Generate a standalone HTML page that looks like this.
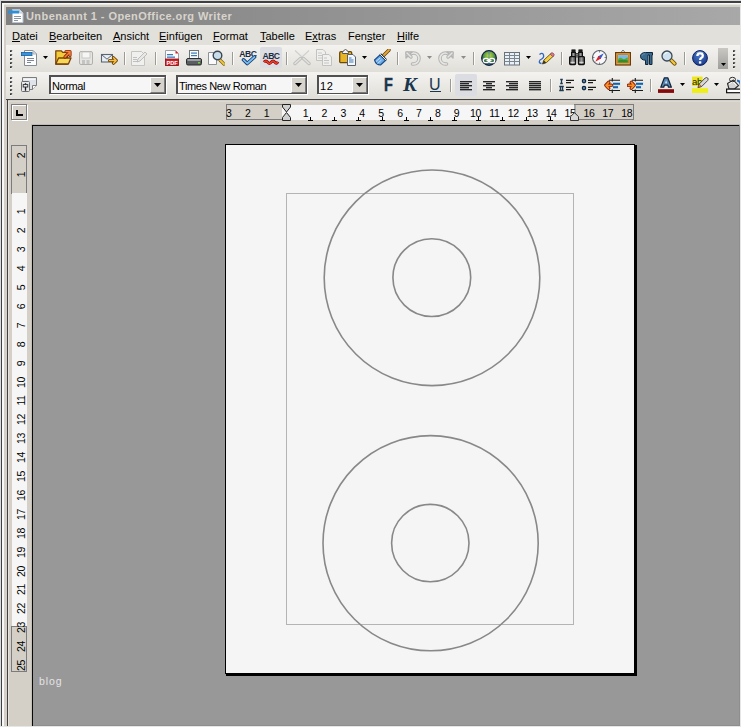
<!DOCTYPE html>
<html><head><meta charset="utf-8"><style>
html,body{margin:0;padding:0}
body{-webkit-font-smoothing:antialiased;width:741px;height:727px;overflow:hidden;position:relative;background:#d4d0c8;font-family:"Liberation Sans",sans-serif}
</style></head><body>
<div style="position:absolute;left:0px;top:0px;width:741px;height:1px;background:#dcdcdc"></div>
<div style="position:absolute;left:0px;top:1px;width:741px;height:2px;background:#404040"></div>
<div style="position:absolute;left:0px;top:3px;width:741px;height:1px;background:#f8f8f8"></div>
<div style="position:absolute;left:0px;top:4px;width:741px;height:1px;background:#e8e6e0"></div>
<div style="position:absolute;left:0px;top:0px;width:1px;height:727px;background:#d8dce0"></div>
<div style="position:absolute;left:1px;top:1px;width:1px;height:726px;background:#404040"></div>
<div style="position:absolute;left:2px;top:3px;width:2px;height:724px;background:#f8f8f8"></div>
<div style="position:absolute;left:6px;top:7px;width:735px;height:18px;background:linear-gradient(to right,#808080,#a8a8a8)"></div>
<div style="position:absolute;left:6px;top:25px;width:735px;height:20px;background:#e2e0da"></div>
<div style="position:absolute;left:6px;top:45px;width:735px;height:27px;background:linear-gradient(#f4f3f0,#e0ded8)"></div>
<div style="position:absolute;left:6px;top:72px;width:735px;height:27px;background:linear-gradient(#f4f3f0,#e0ded8)"></div>
<div style="position:absolute;left:6px;top:99px;width:735px;height:1px;background:#404040"></div>
<div style="position:absolute;left:6px;top:100px;width:735px;height:627px;background:#d4d0c8"></div>
<div style="position:absolute;left:7px;top:100px;width:1px;height:627px;background:#404040"></div>
<div style="position:absolute;left:32px;top:125px;width:709px;height:602px;background:#989898"></div>
<div style="position:absolute;left:31px;top:124px;width:710px;height:1px;background:#bcbab4"></div>
<div style="position:absolute;left:31px;top:124px;width:1px;height:603px;background:#c4c0b8"></div>
<div style="position:absolute;left:32px;top:125px;width:709px;height:1px;background:#080808"></div>
<div style="position:absolute;left:32px;top:125px;width:1px;height:602px;background:#080808"></div>
<div style="position:absolute;left:225px;top:144px;width:409px;height:529px;background:#f5f5f5;border-left:1px solid #000;border-top:1px solid #000"></div>
<div style="position:absolute;left:634px;top:145px;width:3px;height:531px;background:#000"></div>
<div style="position:absolute;left:226px;top:673px;width:411px;height:3px;background:#000"></div>
<div style="position:absolute;left:286px;top:193px;width:288px;height:432px;border:1px solid #b4b4b4;box-sizing:border-box"></div>
<svg style="position:absolute;left:225px;top:144px" width="410" height="530" viewBox="0 0 410 530"><circle cx="207" cy="133.8" r="107.8" fill="none" stroke="#888" stroke-width="1.6"/><circle cx="206.8" cy="133.6" r="38.9" fill="none" stroke="#888" stroke-width="1.6"/><circle cx="205.6" cy="399.2" r="107.6" fill="none" stroke="#888" stroke-width="1.6"/><circle cx="205.3" cy="399.1" r="38.7" fill="none" stroke="#888" stroke-width="1.6"/></svg>
<div style="position:absolute;left:39px;top:675px;white-space:nowrap;font-size:10.5px;color:#e4e4e4;line-height:13px;letter-spacing:0.9px">blog</div>
<svg style="position:absolute;left:8px;top:9px" width="16" height="14" viewBox="0 0 16 14"><path d="M4.5 0.5h7l3.5 3.5v9.5h-10.5z" fill="#fff" stroke="#b8c4d0" stroke-width="1"/><path d="M11.5 0.5v3.5h3.5" fill="#dde6ee" stroke="#b8c4d0" stroke-width="1"/><rect x="0" y="1.5" width="11" height="3" fill="#2d8fd8"/><rect x="6" y="7" width="7" height="1" fill="#8a96a2"/><rect x="6" y="9" width="7" height="1" fill="#8a96a2"/><rect x="6" y="11" width="4" height="1" fill="#8a96a2"/></svg>
<div style="position:absolute;left:26px;top:9px;white-space:nowrap;font-size:11px;font-weight:bold;color:#d8d4cc;line-height:14px;letter-spacing:0.43px">Unbenannt 1 - OpenOffice.org Writer</div>
<div style="position:absolute;left:12px;top:29px;white-space:nowrap;font-size:11px;color:#000;line-height:14px"><u>D</u>atei</div>
<div style="position:absolute;left:49px;top:29px;white-space:nowrap;font-size:11px;color:#000;line-height:14px"><u>B</u>earbeiten</div>
<div style="position:absolute;left:113px;top:29px;white-space:nowrap;font-size:11px;color:#000;line-height:14px"><u>A</u>nsicht</div>
<div style="position:absolute;left:159px;top:29px;white-space:nowrap;font-size:11px;color:#000;line-height:14px"><u>E</u>infügen</div>
<div style="position:absolute;left:213px;top:29px;white-space:nowrap;font-size:11px;color:#000;line-height:14px"><u>F</u>ormat</div>
<div style="position:absolute;left:260px;top:29px;white-space:nowrap;font-size:11px;color:#000;line-height:14px"><u>T</u>abelle</div>
<div style="position:absolute;left:305px;top:29px;white-space:nowrap;font-size:11px;color:#000;line-height:14px">E<u>x</u>tras</div>
<div style="position:absolute;left:348px;top:29px;white-space:nowrap;font-size:11px;color:#000;line-height:14px">Fen<u>s</u>ter</div>
<div style="position:absolute;left:397px;top:29px;white-space:nowrap;font-size:11px;color:#000;line-height:14px"><u>H</u>ilfe</div>
<svg style="position:absolute;left:10px;top:50px" width="4" height="21" viewBox="0 0 4 21"><path d="M0 0.2h2.2v.8l-1.3 1.3h-.9z" fill="#2e2e2e"/><path d="M0 2.6h1.6" stroke="#fff" stroke-width=".8"/><path d="M0 4.2h2.2v.8l-1.3 1.3h-.9z" fill="#2e2e2e"/><path d="M0 6.6h1.6" stroke="#fff" stroke-width=".8"/><path d="M0 8.2h2.2v.8l-1.3 1.3h-.9z" fill="#2e2e2e"/><path d="M0 10.6h1.6" stroke="#fff" stroke-width=".8"/><path d="M0 12.2h2.2v.8l-1.3 1.3h-.9z" fill="#2e2e2e"/><path d="M0 14.6h1.6" stroke="#fff" stroke-width=".8"/><path d="M0 16.2h2.2v.8l-1.3 1.3h-.9z" fill="#2e2e2e"/><path d="M0 18.6h1.6" stroke="#fff" stroke-width=".8"/></svg>
<svg style="position:absolute;left:21px;top:50px" width="16" height="16" viewBox="0 0 16 16"><path d="M3.5 .5h8.5l3.5 3.5v11.5h-12z" fill="#fdfdfd" stroke="#858c94"/><path d="M12 .5l3.5 3.5h-3.5z" fill="#e4e8ec" stroke="#a0a6ac" stroke-width=".8"/><rect x=".4" y="2.4" width="10.6" height="3.2" fill="#3494dc" stroke="#1b5f9e" stroke-width=".8"/><rect x="6" y="8" width="7" height="1" fill="#7c8894"/><rect x="6" y="10" width="7" height="1" fill="#7c8894"/><rect x="6" y="12" width="4" height="1" fill="#7c8894"/></svg>
<svg style="position:absolute;left:43px;top:56px" width="5" height="3" viewBox="0 0 5 3"><path d="M0 0h5l-2.5 3z" fill="#000"/></svg>
<svg style="position:absolute;left:55px;top:49px" width="17" height="17" viewBox="0 0 17 17"><path d="M.8 15V1.8h5.4l1.6 1.6h4.6V15z" fill="#f2cc38" stroke="#7a4008" stroke-width="1.3" stroke-linejoin="round"/><path d="M3.6 9h12.4l-2.6 6h-12.6z" fill="#f6d858" stroke="#7a4008" stroke-width="1.3" stroke-linejoin="round"/><path d="M10 8l4.5-4.5M11 2.5h4v4" fill="none" stroke="#8a2a08" stroke-width="3.2" stroke-linecap="round" stroke-linejoin="round"/><path d="M10 8l4.5-4.5M11 2.5h4v4" fill="none" stroke="#f4823a" stroke-width="1.5" stroke-linecap="round" stroke-linejoin="round"/></svg>
<svg style="position:absolute;left:79px;top:51px" width="14" height="14" viewBox="0 0 14 14"><rect x=".5" y=".5" width="13" height="13" rx="1.5" fill="#e6e5e2" stroke="#b0b0ae"/><rect x="3" y="1" width="8" height="6" fill="#f6f6f4" stroke="#c0c0be" stroke-width=".8"/><rect x="3" y="9" width="3" height="4" fill="#c4c4c2"/><rect x="7.5" y="9" width="3" height="4" fill="#c4c4c2"/></svg>
<svg style="position:absolute;left:100px;top:53px" width="18" height="12" viewBox="0 0 18 12"><rect x="1.5" y="1.5" width="11" height="7.5" fill="#e8eef6" stroke="#5c6670" stroke-width="1.1"/><path d="M1.8 1.8l5.2 4.4 5.2-4.4" fill="none" stroke="#5c6670" stroke-width="1"/><path d="M9.5 7.5h6M13.5 4.8l2.7 2.7-2.7 2.7" fill="none" stroke="#6a4008" stroke-width="3.2" stroke-linecap="round" stroke-linejoin="round"/><path d="M9.5 7.5h6M13.5 4.8l2.7 2.7-2.7 2.7" fill="none" stroke="#f8c040" stroke-width="1.5" stroke-linecap="round" stroke-linejoin="round"/></svg>
<div style="position:absolute;left:124px;top:52px;width:1px;height:13px;background:#9c9a94;box-shadow:1px 0 0 #fcfcfa"></div>
<svg style="position:absolute;left:131px;top:50px" width="16" height="16" viewBox="0 0 16 16"><path d="M.5 1.5h10l3 3v11h-13z" fill="#f0f0ee" stroke="#c4c4c2"/><rect x="2" y="7" width="4" height="1" fill="#c0c0c0"/><rect x="2" y="9" width="4" height="1" fill="#c0c0c0"/><rect x="2" y="11" width="4" height="1" fill="#c0c0c0"/><path d="M6 12l1-3 7-7 2 2-7 7z" fill="#e8e8e6" stroke="#b8b8b6" stroke-width=".9"/></svg>
<div style="position:absolute;left:155px;top:52px;width:1px;height:13px;background:#9c9a94;box-shadow:1px 0 0 #fcfcfa"></div>
<svg style="position:absolute;left:165px;top:50px" width="14" height="16" viewBox="0 0 14 16"><path d="M.5 .5h10l3 3v12h-13z" fill="#fbfbfb" stroke="#9aa0a6"/><path d="M10.5 .5v3h3" fill="#d8202a"/><rect x="2" y="4" width="6" height="1.3" fill="#3a78b8"/><rect x="2" y="6.5" width="8" height="1.3" fill="#3a78b8"/><rect x=".5" y="9" width="13" height="6.5" fill="#d02028" stroke="#901016" stroke-width=".8"/><text x="7" y="14.6" font-size="5.6" font-weight="bold" fill="#fff" text-anchor="middle" font-family="Liberation Sans">PDF</text></svg>
<svg style="position:absolute;left:186px;top:50px" width="16" height="16" viewBox="0 0 16 16"><rect x="3.5" y=".5" width="9" height="8" fill="#fafafa" stroke="#6e7478"/><rect x="5" y="2.5" width="6" height="1.2" fill="#3a78b8"/><rect x="5" y="5" width="6" height="1.2" fill="#3a78b8"/><rect x=".5" y="8.5" width="15" height="6.5" rx="1.5" fill="#5a5e60" stroke="#2a2c2e"/><rect x="1.5" y="9" width="13" height="2" fill="#9aa0a2"/><rect x="12" y="12" width="2" height="1.5" fill="#6ad040"/></svg>
<svg style="position:absolute;left:208px;top:50px" width="17" height="16" viewBox="0 0 17 16"><path d="M.5 2.5h8v12h-8z" fill="#fafafa" stroke="#8c9298"/><path d="M12 10l4 4" stroke="#7a5a10" stroke-width="3.2" stroke-linecap="round"/><path d="M12 10l4 4" stroke="#f0c840" stroke-width="1.8" stroke-linecap="round"/><circle cx="9.5" cy="5.5" r="4.3" fill="#c8dcec" stroke="#3a4650" stroke-width="1.4"/></svg>
<div style="position:absolute;left:232px;top:52px;width:1px;height:13px;background:#9c9a94;box-shadow:1px 0 0 #fcfcfa"></div>
<svg style="position:absolute;left:239px;top:50px" width="18" height="16" viewBox="0 0 18 16"><text x="8.8" y="6.6" font-size="8.6" font-weight="bold" fill="#1a2c44" text-anchor="middle" font-family="Liberation Sans" letter-spacing="-.5">ABC</text><path d="M4.5 9.8l3.7 3.7 7.3-6.5" fill="none" stroke="#163e70" stroke-width="3.6" stroke-linejoin="round" stroke-linecap="round"/><path d="M4.5 9.8l3.7 3.7 7.3-6.5" fill="none" stroke="#78c0f4" stroke-width="1.7" stroke-linejoin="round" stroke-linecap="round"/></svg>
<div style="position:absolute;left:260px;top:47px;width:22px;height:21px;background:#dcdde2;border-radius:2px"></div>
<svg style="position:absolute;left:262px;top:51px" width="18" height="16" viewBox="0 0 18 16"><text x="9" y="7.6" font-size="8.6" font-weight="bold" fill="#1a2c44" text-anchor="middle" font-family="Liberation Sans" letter-spacing="-.5">ABC</text><path d="M2 11.2q1.8-2.4 3.6 0t3.6 0 3.6 0 3-.5" fill="none" stroke="#8a0a0a" stroke-width="3"/><path d="M2 11.2q1.8-2.4 3.6 0t3.6 0 3.6 0 3-.5" fill="none" stroke="#f04028" stroke-width="1.5"/></svg>
<div style="position:absolute;left:286px;top:52px;width:1px;height:13px;background:#9c9a94;box-shadow:1px 0 0 #fcfcfa"></div>
<svg style="position:absolute;left:293px;top:49px" width="18" height="17" viewBox="0 0 18 17"><path d="M2 1.5l14 13M16 1.5l-14 13" stroke="#cfcfcd" stroke-width="1.1"/><path d="M2 14.5l5.5-5M16 14.5l-5.5-5" stroke="#bdbdbb" stroke-width="3.4" stroke-linecap="round"/><path d="M2 14.5l5.5-5M16 14.5l-5.5-5" stroke="#e2e2e0" stroke-width="1.6" stroke-linecap="round"/></svg>
<svg style="position:absolute;left:316px;top:49px" width="17" height="17" viewBox="0 0 17 17"><path d="M.5 .5h6.5l2.5 2.5v8.5h-9z" fill="#f0f0ee" stroke="#c2c2c0"/><path d="M2 4h4M2 6.5h4M2 9h4" stroke="#c8c8c6" stroke-width="1"/><path d="M6.5 5.5h6.5l2.5 2.5v8.5h-9z" fill="#f0f0ee" stroke="#c2c2c0"/><path d="M8 9h3M8 11.5h5M8 14h5" stroke="#c4c4c2" stroke-width="1"/></svg>
<svg style="position:absolute;left:339px;top:49px" width="18" height="17" viewBox="0 0 18 17"><rect x=".7" y="2.7" width="12" height="11" rx="1.2" fill="#e8b428" stroke="#6a4a0a" stroke-width="1.3"/><path d="M3.5 4.5h6v-1.2q-.5-1.8-3-2.8q-2.5 1-3 2.8z" fill="#f4f4f4" stroke="#555" stroke-width="1"/><path d="M8.5 5.5h5.5l2.5 2.5v8.5h-8z" fill="#f4f8fc" stroke="#5a6068"/><path d="M10 11h4.5M10 13h4.5M10 9h2.5" stroke="#3a78b8" stroke-width="1.1"/></svg>
<svg style="position:absolute;left:362px;top:56px" width="5" height="3" viewBox="0 0 5 3"><path d="M0 0h5l-2.5 3z" fill="#000"/></svg>
<svg style="position:absolute;left:373px;top:49px" width="18" height="17" viewBox="0 0 18 17"><path d="M10.5 6.5l5.5-5.5" stroke="#6a4208" stroke-width="3.4" stroke-linecap="round"/><path d="M10.5 6.5l5.5-5.5" stroke="#e2a83a" stroke-width="1.8" stroke-linecap="round"/><path d="M1.5 11l6-5.5 5.5 5.5-5.5 5q-4.5 0-6-5z" fill="#68aae8" stroke="#1a4a88" stroke-width="1.1" stroke-linejoin="round"/><path d="M7.2 5.2l5.8 5.8" stroke="#2a3a50" stroke-width="2.4"/><path d="M7.2 5.2l5.8 5.8" stroke="#e8f0f8" stroke-width="1"/><path d="M3 12.5l4-3.5M4.5 14.5l4-3.5" stroke="#c4e0fa" stroke-width="1"/></svg>
<div style="position:absolute;left:397px;top:52px;width:1px;height:13px;background:#9c9a94;box-shadow:1px 0 0 #fcfcfa"></div>
<svg style="position:absolute;left:404px;top:50px" width="17" height="17" viewBox="0 0 17 17"><path d="M5 5.5q1.5-2.5 4.5-2.5a5.5 5.5 0 0 1 0 11h-1" fill="none" stroke="#b4b4b2" stroke-width="3.6" stroke-linecap="round"/><path d="M5 5.5q1.5-2.5 4.5-2.5a5.5 5.5 0 0 1 0 11h-1" fill="none" stroke="#e6e6e4" stroke-width="1.6" stroke-linecap="round"/><path d="M2 8v-6h6z" fill="#e6e6e4" stroke="#b4b4b2" stroke-width="1.4" stroke-linejoin="round"/><path d="M3 3l4 4" stroke="#b4b4b2" stroke-width="3.4" stroke-linecap="round"/><path d="M3 3l4 4" stroke="#e6e6e4" stroke-width="1.4" stroke-linecap="round"/></svg>
<svg style="position:absolute;left:427px;top:56px" width="5" height="3" viewBox="0 0 5 3"><path d="M0 0h5l-2.5 3z" fill="#8c8c8a"/></svg>
<svg style="position:absolute;left:438px;top:50px" width="17" height="17" viewBox="0 0 17 17"><g transform="translate(17,0) scale(-1,1)"><path d="M5 5.5q1.5-2.5 4.5-2.5a5.5 5.5 0 0 1 0 11h-1" fill="none" stroke="#b4b4b2" stroke-width="3.6" stroke-linecap="round"/><path d="M5 5.5q1.5-2.5 4.5-2.5a5.5 5.5 0 0 1 0 11h-1" fill="none" stroke="#e6e6e4" stroke-width="1.6" stroke-linecap="round"/><path d="M2 8v-6h6z" fill="#e6e6e4" stroke="#b4b4b2" stroke-width="1.4" stroke-linejoin="round"/><path d="M3 3l4 4" stroke="#b4b4b2" stroke-width="3.4" stroke-linecap="round"/><path d="M3 3l4 4" stroke="#e6e6e4" stroke-width="1.4" stroke-linecap="round"/></g></svg>
<svg style="position:absolute;left:461px;top:56px" width="5" height="3" viewBox="0 0 5 3"><path d="M0 0h5l-2.5 3z" fill="#8c8c8a"/></svg>
<div style="position:absolute;left:473px;top:52px;width:1px;height:13px;background:#9c9a94;box-shadow:1px 0 0 #fcfcfa"></div>
<svg style="position:absolute;left:481px;top:50px" width="16" height="16" viewBox="0 0 16 16"><defs><radialGradient id="gl" cx="50%" cy="35%" r="60%"><stop offset="0" stop-color="#c8e040"/><stop offset=".55" stop-color="#5a9a48"/><stop offset="1" stop-color="#1e3c64"/></radialGradient></defs><circle cx="8" cy="8" r="7.4" fill="url(#gl)" stroke="#14243a" stroke-width="1.1"/><path d="M8 1v14" stroke="#3a7ab8" stroke-width=".8"/><rect x="2.3" y="8.3" width="5.4" height="4.4" rx="2.2" fill="none" stroke="#fff" stroke-width="1.3"/><rect x="8.3" y="8.3" width="5.4" height="4.4" rx="2.2" fill="none" stroke="#fff" stroke-width="1.3"/><path d="M5.5 10.5h5" stroke="#fff" stroke-width="1.2"/></svg>
<svg style="position:absolute;left:504px;top:52px" width="16" height="14" viewBox="0 0 16 14"><rect x=".5" y=".5" width="15" height="12.5" fill="#e8f0f8" stroke="#687078"/><path d="M5.5 .5v12.5M10.5 .5v12.5M.5 3.5h15M.5 6.5h15M.5 9.5h15" stroke="#7c848c" stroke-width="1"/></svg>
<svg style="position:absolute;left:526px;top:56px" width="5" height="3" viewBox="0 0 5 3"><path d="M0 0h5l-2.5 3z" fill="#000"/></svg>
<svg style="position:absolute;left:538px;top:52px" width="17" height="13" viewBox="0 0 17 13"><path d="M1.5 2.5q3-2.5 4 .5t-3.5 5q-2 3 1.5 3.5" fill="none" stroke="#2e64c0" stroke-width="1.3"/><path d="M4.5 12l1.3-3.8 7.5-7 2.5 2.5-7.5 7z" fill="#f6d040" stroke="#5a4a20" stroke-width=".9"/><path d="M12.3 2.2l2.5 2.5 1.2-1.2q.5-1-.5-2t-2 -.5z" fill="#e07a90" stroke="#7a3a48" stroke-width=".7"/><path d="M4.5 12l1.3-3.8 2.5 2.5z" fill="#333"/></svg>
<div style="position:absolute;left:561px;top:52px;width:1px;height:13px;background:#9c9a94;box-shadow:1px 0 0 #fcfcfa"></div>
<svg style="position:absolute;left:569px;top:49px" width="16" height="17" viewBox="0 0 16 17"><defs><linearGradient id="bn" x1="0" x2="1"><stop offset="0" stop-color="#3a3a3a"/><stop offset=".5" stop-color="#9a9a9a"/><stop offset="1" stop-color="#3a3a3a"/></linearGradient></defs><rect x="2.5" y="3.5" width="4" height="4.5" fill="url(#bn)" stroke="#111" stroke-width="1"/><rect x="9.5" y="3.5" width="4" height="4.5" fill="url(#bn)" stroke="#111" stroke-width="1"/><rect x="2.8" y=".8" width="3.4" height="2.7" fill="#1a1a1a" stroke="#111" stroke-width=".6"/><rect x="9.8" y=".8" width="3.4" height="2.7" fill="#1a1a1a" stroke="#111" stroke-width=".6"/><rect x="6.5" y="4.5" width="3" height="3.5" fill="#9a9a9a" stroke="#222" stroke-width=".8"/><path d="M6.5 6.2h3" stroke="#333" stroke-width=".8"/><rect x=".6" y="7.6" width="6" height="8" rx="1" fill="url(#bn)" stroke="#111" stroke-width="1.2"/><rect x="9.4" y="7.6" width="6" height="8" rx="1" fill="url(#bn)" stroke="#111" stroke-width="1.2"/><path d="M1.5 13.3h4.2M10.3 13.3h4.2" stroke="#e8e8e8" stroke-width="1"/></svg>
<svg style="position:absolute;left:592px;top:50px" width="16" height="16" viewBox="0 0 16 16"><circle cx="7.5" cy="7.5" r="7" fill="#f8f8fa" stroke="#5a6268" stroke-width="1.1"/><path d="M11.8 3.2l-5.9 3.2 2.7 2.7z" fill="#2c5cd0"/><path d="M3.2 11.8l5.9-3.2-2.7-2.7z" fill="#e02020"/><path d="M7.5 1v1.5M7.5 12.5v1.5M1 7.5h1.5M12.5 7.5h1.5" stroke="#666" stroke-width=".8"/></svg>
<svg style="position:absolute;left:615px;top:49px" width="16" height="17" viewBox="0 0 16 17"><path d="M5.5 4l2.5-3 2.5 3" fill="none" stroke="#666" stroke-width=".9"/><rect x=".6" y="3.6" width="14.8" height="12.4" fill="#e8a848" stroke="#6a3a08" stroke-width="1.2"/><rect x="2.8" y="5.8" width="10.4" height="8" fill="#f4d8a0" stroke="#8a5a20" stroke-width=".6"/><rect x="3.2" y="6.2" width="9.6" height="7.2" fill="#78b8e8"/><path d="M3.2 10q2-2.2 4-.5t5.6-1.2v5.1h-9.6z" fill="#58a838"/><path d="M3.2 11.5q3-1.5 9.6 0v1.9h-9.6z" fill="#3a8a28"/></svg>
<svg style="position:absolute;left:640px;top:52px" width="13" height="13" viewBox="0 0 13 13"><path d="M5.5 .5H12.5V3H12V12.5H9.5V3H8V12.5H5.5V8.2C2 8.2 .5 6.5 .5 4.3C.5 2 2.2 .5 5.5 .5Z" fill="#3a6a90" stroke="#0e2638" stroke-width="1"/><path d="M5 1.8C3 1.8 2 2.8 2 4" fill="none" stroke="#6a9cc0" stroke-width=".8"/></svg>
<svg style="position:absolute;left:661px;top:50px" width="16" height="16" viewBox="0 0 16 16"><path d="M9.8 9.8l3.8 3.8" stroke="#6a4a08" stroke-width="4" stroke-linecap="round"/><path d="M9.8 9.8l3.8 3.8" stroke="#f0c840" stroke-width="2.2" stroke-linecap="round"/><circle cx="6" cy="6" r="5" fill="#cfe0ee" stroke="#3c4a56" stroke-width="1.3"/><path d="M3.5 4.5q1-2 3-2" fill="none" stroke="#fff" stroke-width=".9"/></svg>
<div style="position:absolute;left:684px;top:52px;width:1px;height:13px;background:#9c9a94;box-shadow:1px 0 0 #fcfcfa"></div>
<svg style="position:absolute;left:692px;top:50px" width="16" height="16" viewBox="0 0 16 16"><defs><radialGradient id="hp" cx="45%" cy="35%" r="65%"><stop offset="0" stop-color="#4a78c8"/><stop offset="1" stop-color="#1c3c8c"/></radialGradient></defs><circle cx="8" cy="8" r="7.4" fill="url(#hp)" stroke="#0c2060" stroke-width="1"/><path d="M4.6 2.6q3.4-1.3 6.8 0" fill="none" stroke="#8aa8e0" stroke-width=".9"/><path d="M5.4 5.9q0-2.6 2.7-2.6t2.7 2.4q0 1.5-1.6 2.3q-1.1.6-1.1 2" fill="none" stroke="#fff" stroke-width="2.3"/><rect x="6.9" y="11.3" width="2.4" height="2.3" fill="#fff"/></svg>
<div style="position:absolute;left:718px;top:48px;width:10px;height:21px;background:linear-gradient(#cac8c2,#9e9e9c)"></div>
<svg style="position:absolute;left:721px;top:63px" width="5" height="3" viewBox="0 0 5 3"><path d="M0 0h5l-2.5 3z" fill="#000"/></svg>
<svg style="position:absolute;left:733px;top:50px" width="4" height="21" viewBox="0 0 4 21"><path d="M0 0.2h2.2v.8l-1.3 1.3h-.9z" fill="#2e2e2e"/><path d="M0 2.6h1.6" stroke="#fff" stroke-width=".8"/><path d="M0 4.2h2.2v.8l-1.3 1.3h-.9z" fill="#2e2e2e"/><path d="M0 6.6h1.6" stroke="#fff" stroke-width=".8"/><path d="M0 8.2h2.2v.8l-1.3 1.3h-.9z" fill="#2e2e2e"/><path d="M0 10.6h1.6" stroke="#fff" stroke-width=".8"/><path d="M0 12.2h2.2v.8l-1.3 1.3h-.9z" fill="#2e2e2e"/><path d="M0 14.6h1.6" stroke="#fff" stroke-width=".8"/><path d="M0 16.2h2.2v.8l-1.3 1.3h-.9z" fill="#2e2e2e"/><path d="M0 18.6h1.6" stroke="#fff" stroke-width=".8"/></svg>
<svg style="position:absolute;left:10px;top:77px" width="4" height="21" viewBox="0 0 4 21"><path d="M0 0.2h2.2v.8l-1.3 1.3h-.9z" fill="#2e2e2e"/><path d="M0 2.6h1.6" stroke="#fff" stroke-width=".8"/><path d="M0 4.2h2.2v.8l-1.3 1.3h-.9z" fill="#2e2e2e"/><path d="M0 6.6h1.6" stroke="#fff" stroke-width=".8"/><path d="M0 8.2h2.2v.8l-1.3 1.3h-.9z" fill="#2e2e2e"/><path d="M0 10.6h1.6" stroke="#fff" stroke-width=".8"/><path d="M0 12.2h2.2v.8l-1.3 1.3h-.9z" fill="#2e2e2e"/><path d="M0 14.6h1.6" stroke="#fff" stroke-width=".8"/><path d="M0 16.2h2.2v.8l-1.3 1.3h-.9z" fill="#2e2e2e"/><path d="M0 18.6h1.6" stroke="#fff" stroke-width=".8"/></svg>
<svg style="position:absolute;left:21px;top:77px" width="16" height="16" viewBox="0 0 16 16"><path d="M1.5 .5h14v8l-4 4h-10z" fill="#dfe4ea" stroke="#7c7c7c"/><path d="M2.5 1.5h12v1.5h-12z" fill="#f4f6f8"/><path d="M11.5 12.5v-4h4" fill="#fafafa" stroke="#7c7c7c"/><rect x=".5" y="4.5" width="8" height="10" rx="1" fill="#e6eaee" stroke="#6a6a6a"/><path d="M4.5 6.2v1.5M4.5 10v3.8" stroke="#1a1a1a" stroke-width="1.3"/><rect x="2.2" y="7.6" width="4.6" height="2.4" fill="#f4f4f4" stroke="#2a2a2a" stroke-width=".9"/></svg>
<div style="position:absolute;left:49px;top:75px;width:117px;height:19px;background:#f6f6f6;box-sizing:border-box;border-top:2px solid #505050;border-left:2px solid #505050;border-right:1px solid #505050;border-bottom:1px solid #505050;box-shadow:1px 1px 0 #fff"></div>
<div style="position:absolute;left:150px;top:77px;width:15px;height:16px;background:#d6d3cc;box-sizing:border-box;border-top:1px solid #fff;border-left:1px solid #fff;border-right:1px solid #7a7a7a;border-bottom:1px solid #7a7a7a"></div>
<svg style="position:absolute;left:154px;top:83px" width="7" height="4" viewBox="0 0 7 4"><path d="M0 0h7l-3.5 4z" fill="#000"/></svg>
<div style="position:absolute;left:52px;top:80px;white-space:nowrap;font-size:11px;color:#000;line-height:13px;letter-spacing:-0.4px">Normal</div>
<div style="position:absolute;left:176px;top:75px;width:131px;height:19px;background:#f6f6f6;box-sizing:border-box;border-top:2px solid #505050;border-left:2px solid #505050;border-right:1px solid #505050;border-bottom:1px solid #505050;box-shadow:1px 1px 0 #fff"></div>
<div style="position:absolute;left:291px;top:77px;width:15px;height:16px;background:#d6d3cc;box-sizing:border-box;border-top:1px solid #fff;border-left:1px solid #fff;border-right:1px solid #7a7a7a;border-bottom:1px solid #7a7a7a"></div>
<svg style="position:absolute;left:295px;top:83px" width="7" height="4" viewBox="0 0 7 4"><path d="M0 0h7l-3.5 4z" fill="#000"/></svg>
<div style="position:absolute;left:179px;top:80px;white-space:nowrap;font-size:11px;color:#000;line-height:13px;letter-spacing:-0.4px">Times New Roman</div>
<div style="position:absolute;left:317px;top:75px;width:51px;height:19px;background:#f6f6f6;box-sizing:border-box;border-top:2px solid #505050;border-left:2px solid #505050;border-right:1px solid #505050;border-bottom:1px solid #505050;box-shadow:1px 1px 0 #fff"></div>
<div style="position:absolute;left:352px;top:77px;width:15px;height:16px;background:#d6d3cc;box-sizing:border-box;border-top:1px solid #fff;border-left:1px solid #fff;border-right:1px solid #7a7a7a;border-bottom:1px solid #7a7a7a"></div>
<svg style="position:absolute;left:356px;top:83px" width="7" height="4" viewBox="0 0 7 4"><path d="M0 0h7l-3.5 4z" fill="#000"/></svg>
<div style="position:absolute;left:320px;top:80px;white-space:nowrap;font-size:11px;color:#000;line-height:13px;letter-spacing:0.6px">12</div>
<div style="position:absolute;left:384px;top:75px;white-space:nowrap;font-size:18px;font-weight:bold;color:#1a364e;line-height:20px;transform:scaleX(0.8);transform-origin:0 0;-webkit-text-stroke:0.5px #1a364e">F</div>
<div style="position:absolute;left:403px;top:75px;white-space:nowrap;font-size:18px;font-weight:bold;font-style:italic;color:#1a364e;line-height:20px;font-family:&quot;Liberation Serif&quot;,serif;transform:scaleX(1.15);transform-origin:0 0">K</div>
<div style="position:absolute;left:429px;top:75px;white-space:nowrap;font-size:16px;color:#1a364e;line-height:20px">U</div>
<div style="position:absolute;left:430px;top:91px;width:11px;height:1px;background:#1a364e"></div>
<div style="position:absolute;left:450px;top:79px;width:1px;height:13px;background:#9c9a94;box-shadow:1px 0 0 #fcfcfa"></div>
<div style="position:absolute;left:455px;top:74px;width:22px;height:22px;background:#dcdde2;border-radius:2px"></div>
<div style="position:absolute;left:460px;top:81px;width:12px;height:1px;background:#262626;box-shadow:0 0.6px 0 #6a6a6a"></div>
<div style="position:absolute;left:460px;top:83px;width:9px;height:1px;background:#262626;box-shadow:0 0.6px 0 #6a6a6a"></div>
<div style="position:absolute;left:460px;top:85px;width:12px;height:1px;background:#262626;box-shadow:0 0.6px 0 #6a6a6a"></div>
<div style="position:absolute;left:460px;top:87px;width:9px;height:1px;background:#262626;box-shadow:0 0.6px 0 #6a6a6a"></div>
<div style="position:absolute;left:460px;top:89px;width:12px;height:1px;background:#262626;box-shadow:0 0.6px 0 #6a6a6a"></div>
<div style="position:absolute;left:483px;top:81px;width:12px;height:1px;background:#262626;box-shadow:0 0.6px 0 #6a6a6a"></div>
<div style="position:absolute;left:486px;top:83px;width:6px;height:1px;background:#262626;box-shadow:0 0.6px 0 #6a6a6a"></div>
<div style="position:absolute;left:483px;top:85px;width:12px;height:1px;background:#262626;box-shadow:0 0.6px 0 #6a6a6a"></div>
<div style="position:absolute;left:486px;top:87px;width:6px;height:1px;background:#262626;box-shadow:0 0.6px 0 #6a6a6a"></div>
<div style="position:absolute;left:483px;top:89px;width:12px;height:1px;background:#262626;box-shadow:0 0.6px 0 #6a6a6a"></div>
<div style="position:absolute;left:506px;top:81px;width:12px;height:1px;background:#262626;box-shadow:0 0.6px 0 #6a6a6a"></div>
<div style="position:absolute;left:509px;top:83px;width:9px;height:1px;background:#262626;box-shadow:0 0.6px 0 #6a6a6a"></div>
<div style="position:absolute;left:506px;top:85px;width:12px;height:1px;background:#262626;box-shadow:0 0.6px 0 #6a6a6a"></div>
<div style="position:absolute;left:509px;top:87px;width:9px;height:1px;background:#262626;box-shadow:0 0.6px 0 #6a6a6a"></div>
<div style="position:absolute;left:506px;top:89px;width:12px;height:1px;background:#262626;box-shadow:0 0.6px 0 #6a6a6a"></div>
<div style="position:absolute;left:529px;top:81px;width:12px;height:1px;background:#262626;box-shadow:0 0.6px 0 #6a6a6a"></div>
<div style="position:absolute;left:529px;top:83px;width:12px;height:1px;background:#262626;box-shadow:0 0.6px 0 #6a6a6a"></div>
<div style="position:absolute;left:529px;top:85px;width:12px;height:1px;background:#262626;box-shadow:0 0.6px 0 #6a6a6a"></div>
<div style="position:absolute;left:529px;top:87px;width:12px;height:1px;background:#262626;box-shadow:0 0.6px 0 #6a6a6a"></div>
<div style="position:absolute;left:529px;top:89px;width:12px;height:1px;background:#262626;box-shadow:0 0.6px 0 #6a6a6a"></div>
<div style="position:absolute;left:550px;top:79px;width:1px;height:13px;background:#9c9a94;box-shadow:1px 0 0 #fcfcfa"></div>
<svg style="position:absolute;left:556px;top:74px" width="44" height="22" viewBox="0 0 44 22"><path d="M4.2 5.5h2.6M5.5 5.5v4M4.2 9.5h2.6" fill="none" stroke="#1e3a52" stroke-width="1.3"/><path d="M3.2 12.5h4.6M4.5 12.5v4M6.5 12.5v4M3.2 16.5h4.6" fill="none" stroke="#1e3a52" stroke-width="1.3"/><path d="M10 6.4h8M10 8.6h5M10 13.4h8M10 15.6h5" stroke="#1c1c1c" stroke-width="1.3"/><circle cx="28" cy="7.1" r="1.7" fill="#5a8ab0" stroke="#10283c" stroke-width="1.2"/><circle cx="28" cy="14.1" r="1.7" fill="#5a8ab0" stroke="#10283c" stroke-width="1.2"/><path d="M32 6.4h8M32 8.6h5M32 13.4h8M32 15.6h5" stroke="#1c1c1c" stroke-width="1.3"/></svg>
<svg style="position:absolute;left:604px;top:78px" width="17" height="16" viewBox="0 0 17 16"><path d="M5 2.3h11M5 12.5h11M8.3 0v3.5M8.3 11.5v3.5" stroke="#1a1a1a" stroke-width="1.1"/><rect x="8.5" y="4.2" width="8" height="3.2" fill="#bfe4fa"/><rect x="8.5" y="7.6" width="6" height="3.2" fill="#bfe4fa"/><rect x="9" y="4.8" width="7" height="2" fill="#1e5e9e"/><rect x="9" y="8.2" width="5" height="2" fill="#1e5e9e"/><path d="M7.5 7.3h-5M4.6 4.5l-2.6 2.8 2.6 2.8" fill="none" stroke="#8a2008" stroke-width="3.6" stroke-linejoin="round" stroke-linecap="round"/><path d="M7.5 7.3h-5M4.6 4.5l-2.6 2.8 2.6 2.8" fill="none" stroke="#f8902a" stroke-width="1.7" stroke-linejoin="round" stroke-linecap="round"/></svg>
<svg style="position:absolute;left:627px;top:78px" width="17" height="16" viewBox="0 0 17 16"><path d="M5 2.3h11M5 12.5h11M8.3 0v3.5M8.3 11.5v3.5" stroke="#1a1a1a" stroke-width="1.1"/><rect x="8.5" y="4.2" width="8" height="3.2" fill="#bfe4fa"/><rect x="8.5" y="7.6" width="6" height="3.2" fill="#bfe4fa"/><rect x="9" y="4.8" width="7" height="2" fill="#1e5e9e"/><rect x="9" y="8.2" width="5" height="2" fill="#1e5e9e"/><path d="M1.5 7.3h5M4.4 4.5l2.6 2.8-2.6 2.8" fill="none" stroke="#8a2008" stroke-width="3.6" stroke-linejoin="round" stroke-linecap="round"/><path d="M1.5 7.3h5M4.4 4.5l2.6 2.8-2.6 2.8" fill="none" stroke="#f8902a" stroke-width="1.7" stroke-linejoin="round" stroke-linecap="round"/></svg>
<div style="position:absolute;left:650px;top:79px;width:1px;height:13px;background:#9c9a94;box-shadow:1px 0 0 #fcfcfa"></div>
<svg style="position:absolute;left:658px;top:77px" width="17" height="16" viewBox="0 0 17 16"><path d="M2.8 10.2l3.6-9.4h3.4l3.6 9.4h-2.9l-.7-2h-3.4l-.7 2z" fill="#5a88b4" stroke="#10243a" stroke-width="1.2" stroke-linejoin="round"/><path d="M7.1 6.3l1-3 1 3z" fill="#eef4fa"/><rect x="0" y="12.2" width="16" height="3.7" fill="#860a0a"/></svg>
<svg style="position:absolute;left:680px;top:83px" width="5" height="3" viewBox="0 0 5 3"><path d="M0 0h5l-2.5 3z" fill="#000"/></svg>
<svg style="position:absolute;left:692px;top:76px" width="17" height="18" viewBox="0 0 17 18"><rect x="0" y=".6" width="10.6" height="9.4" fill="#ece61e"/><rect x="0" y="12.2" width="16" height="4.8" fill="#eeee1a"/><text x="0" y="8.6" font-size="9.5" fill="#1a1a1a" font-family="Liberation Sans" letter-spacing="-.4">ab</text><path d="M6 11.5l1.2-3.5 6-6q1.5-1 2.5 0t0 2.5l-6 6z" fill="#d6d6d6" stroke="#4a4a4a" stroke-width="1"/><path d="M6 11.5l1.2-3.5 2.3 2.3z" fill="#e8a040" stroke="#6a4010" stroke-width=".6"/></svg>
<svg style="position:absolute;left:714px;top:83px" width="5" height="3" viewBox="0 0 5 3"><path d="M0 0h5l-2.5 3z" fill="#000"/></svg>
<svg style="position:absolute;left:726px;top:76px" width="15" height="18" viewBox="0 0 15 18"><path d="M11 4.5q4 .5 4 6" fill="none" stroke="#2a6ab8" stroke-width="2.2"/><path d="M1.5 7.5l6-3.5 5 5.5-4 3.5h-5.5z" fill="#d4d4d4" stroke="#2a2a2a" stroke-width="1.1" stroke-linejoin="round"/><path d="M3 8l4-2.2 3.5 3.8" fill="none" stroke="#fafafa" stroke-width="1"/><ellipse cx="6.5" cy="3.5" rx="3" ry="2.2" fill="none" stroke="#2a2a2a" stroke-width="1"/><rect x=".6" y="13.1" width="15" height="3.6" fill="#fff" stroke="#111" stroke-width="1.2"/></svg>
<div style="position:absolute;left:8px;top:101px;width:733px;height:1px;background:#dcd9d2"></div>
<div style="position:absolute;left:8px;top:101px;width:1px;height:626px;background:#e6e4de"></div>
<div style="position:absolute;left:11px;top:104px;width:16px;height:16px;box-sizing:border-box;border:1px solid #7c7c7c;box-shadow:1px 1px 0 #fff, inset 1px 1px 0 #fff;background:#d4d0c8"></div>
<div style="position:absolute;left:16px;top:110px;width:2px;height:6px;background:#000"></div>
<div style="position:absolute;left:16px;top:114px;width:7px;height:2px;background:#000"></div>
<div style="position:absolute;left:226px;top:104px;width:57px;height:16px;box-sizing:border-box;border:1px solid #7c7c7c;background:#d4d0c8"></div>
<div style="position:absolute;left:574px;top:104px;width:60px;height:16px;box-sizing:border-box;border:1px solid #7c7c7c;background:#d4d0c8"></div>
<div style="position:absolute;left:282px;top:105px;width:293px;height:15px;background:#f6f6f6"></div>
<div style="position:absolute;left:574px;top:105px;width:2px;height:14px;background:#a8a8a4"></div>
<div style="position:absolute;left:213.8px;top:107px;width:30px;text-align:center;font-size:10.5px;line-height:13px;color:#000;letter-spacing:-0.4px">3</div>
<div style="position:absolute;left:232.7px;top:107px;width:30px;text-align:center;font-size:10.5px;line-height:13px;color:#000;letter-spacing:-0.4px">2</div>
<div style="position:absolute;left:251.6px;top:107px;width:30px;text-align:center;font-size:10.5px;line-height:13px;color:#000;letter-spacing:-0.4px">1</div>
<div style="position:absolute;left:290.4px;top:107px;width:30px;text-align:center;font-size:10.5px;line-height:13px;color:#000;letter-spacing:-0.4px">1</div>
<div style="position:absolute;left:309.3px;top:107px;width:30px;text-align:center;font-size:10.5px;line-height:13px;color:#000;letter-spacing:-0.4px">2</div>
<div style="position:absolute;left:328.2px;top:107px;width:30px;text-align:center;font-size:10.5px;line-height:13px;color:#000;letter-spacing:-0.4px">3</div>
<div style="position:absolute;left:347.1px;top:107px;width:30px;text-align:center;font-size:10.5px;line-height:13px;color:#000;letter-spacing:-0.4px">4</div>
<div style="position:absolute;left:366.0px;top:107px;width:30px;text-align:center;font-size:10.5px;line-height:13px;color:#000;letter-spacing:-0.4px">5</div>
<div style="position:absolute;left:384.9px;top:107px;width:30px;text-align:center;font-size:10.5px;line-height:13px;color:#000;letter-spacing:-0.4px">6</div>
<div style="position:absolute;left:403.8px;top:107px;width:30px;text-align:center;font-size:10.5px;line-height:13px;color:#000;letter-spacing:-0.4px">7</div>
<div style="position:absolute;left:422.7px;top:107px;width:30px;text-align:center;font-size:10.5px;line-height:13px;color:#000;letter-spacing:-0.4px">8</div>
<div style="position:absolute;left:441.6px;top:107px;width:30px;text-align:center;font-size:10.5px;line-height:13px;color:#000;letter-spacing:-0.4px">9</div>
<div style="position:absolute;left:460.5px;top:107px;width:30px;text-align:center;font-size:10.5px;line-height:13px;color:#000;letter-spacing:-0.4px">10</div>
<div style="position:absolute;left:479.4px;top:107px;width:30px;text-align:center;font-size:10.5px;line-height:13px;color:#000;letter-spacing:-0.4px">11</div>
<div style="position:absolute;left:498.3px;top:107px;width:30px;text-align:center;font-size:10.5px;line-height:13px;color:#000;letter-spacing:-0.4px">12</div>
<div style="position:absolute;left:517.2px;top:107px;width:30px;text-align:center;font-size:10.5px;line-height:13px;color:#000;letter-spacing:-0.4px">13</div>
<div style="position:absolute;left:536.1px;top:107px;width:30px;text-align:center;font-size:10.5px;line-height:13px;color:#000;letter-spacing:-0.4px">14</div>
<div style="position:absolute;left:555.0px;top:107px;width:30px;text-align:center;font-size:10.5px;line-height:13px;color:#000;letter-spacing:-0.4px">15</div>
<div style="position:absolute;left:573.9px;top:107px;width:30px;text-align:center;font-size:10.5px;line-height:13px;color:#000;letter-spacing:-0.4px">16</div>
<div style="position:absolute;left:592.8px;top:107px;width:30px;text-align:center;font-size:10.5px;line-height:13px;color:#000;letter-spacing:-0.4px">17</div>
<div style="position:absolute;left:611.7px;top:107px;width:30px;text-align:center;font-size:10.5px;line-height:13px;color:#000;letter-spacing:-0.4px">18</div>
<div style="position:absolute;left:310px;top:117px;width:1px;height:4px;background:#000"></div>
<div style="position:absolute;left:308px;top:120px;width:5px;height:1px;background:#000"></div>
<div style="position:absolute;left:334px;top:117px;width:1px;height:4px;background:#000"></div>
<div style="position:absolute;left:332px;top:120px;width:5px;height:1px;background:#000"></div>
<div style="position:absolute;left:358px;top:117px;width:1px;height:4px;background:#000"></div>
<div style="position:absolute;left:356px;top:120px;width:5px;height:1px;background:#000"></div>
<div style="position:absolute;left:382px;top:117px;width:1px;height:4px;background:#000"></div>
<div style="position:absolute;left:380px;top:120px;width:5px;height:1px;background:#000"></div>
<div style="position:absolute;left:406px;top:117px;width:1px;height:4px;background:#000"></div>
<div style="position:absolute;left:404px;top:120px;width:5px;height:1px;background:#000"></div>
<div style="position:absolute;left:430px;top:117px;width:1px;height:4px;background:#000"></div>
<div style="position:absolute;left:428px;top:120px;width:5px;height:1px;background:#000"></div>
<div style="position:absolute;left:454px;top:117px;width:1px;height:4px;background:#000"></div>
<div style="position:absolute;left:452px;top:120px;width:5px;height:1px;background:#000"></div>
<div style="position:absolute;left:478px;top:117px;width:1px;height:4px;background:#000"></div>
<div style="position:absolute;left:476px;top:120px;width:5px;height:1px;background:#000"></div>
<div style="position:absolute;left:502px;top:117px;width:1px;height:4px;background:#000"></div>
<div style="position:absolute;left:500px;top:120px;width:5px;height:1px;background:#000"></div>
<div style="position:absolute;left:526px;top:117px;width:1px;height:4px;background:#000"></div>
<div style="position:absolute;left:524px;top:120px;width:5px;height:1px;background:#000"></div>
<div style="position:absolute;left:550px;top:117px;width:1px;height:4px;background:#000"></div>
<div style="position:absolute;left:548px;top:120px;width:5px;height:1px;background:#000"></div>
<svg style="position:absolute;left:282px;top:104px" width="9" height="17" viewBox="0 0 9 17"><path d="M.5 .5h8v2.5l-4 5-4-5z" fill="#d0d0d0" stroke="#222" stroke-width="1"/><path d="M.5 16.5h8v-3l-4-5-4 5z" fill="#d0d0d0" stroke="#222" stroke-width="1"/></svg>
<svg style="position:absolute;left:570px;top:112px" width="9" height="9" viewBox="0 0 9 9"><path d="M4.5 .7l4 4v3.8h-8v-3.8z" fill="#d8d8d8" stroke="#333" stroke-width="1"/></svg>
<div style="position:absolute;left:11px;top:145px;width:16px;height:49px;box-sizing:border-box;border:1px solid #7c7c7c;background:#d4d0c8"></div>
<div style="position:absolute;left:11px;top:626px;width:16px;height:46px;box-sizing:border-box;border:1px solid #7c7c7c;background:#d4d0c8"></div>
<div style="position:absolute;left:12px;top:193px;width:15px;height:433px;background:#f6f6f6"></div>
<div style="position:absolute;left:6px;top:148.7px;width:30px;height:13px;text-align:center;font-size:10.5px;line-height:13px;color:#000;letter-spacing:-0.4px;transform:rotate(-90deg)">2</div>
<div style="position:absolute;left:6px;top:167.6px;width:30px;height:13px;text-align:center;font-size:10.5px;line-height:13px;color:#000;letter-spacing:-0.4px;transform:rotate(-90deg)">1</div>
<div style="position:absolute;left:6px;top:205.4px;width:30px;height:13px;text-align:center;font-size:10.5px;line-height:13px;color:#000;letter-spacing:-0.4px;transform:rotate(-90deg)">1</div>
<div style="position:absolute;left:6px;top:224.3px;width:30px;height:13px;text-align:center;font-size:10.5px;line-height:13px;color:#000;letter-spacing:-0.4px;transform:rotate(-90deg)">2</div>
<div style="position:absolute;left:6px;top:243.2px;width:30px;height:13px;text-align:center;font-size:10.5px;line-height:13px;color:#000;letter-spacing:-0.4px;transform:rotate(-90deg)">3</div>
<div style="position:absolute;left:6px;top:262.1px;width:30px;height:13px;text-align:center;font-size:10.5px;line-height:13px;color:#000;letter-spacing:-0.4px;transform:rotate(-90deg)">4</div>
<div style="position:absolute;left:6px;top:281.0px;width:30px;height:13px;text-align:center;font-size:10.5px;line-height:13px;color:#000;letter-spacing:-0.4px;transform:rotate(-90deg)">5</div>
<div style="position:absolute;left:6px;top:299.9px;width:30px;height:13px;text-align:center;font-size:10.5px;line-height:13px;color:#000;letter-spacing:-0.4px;transform:rotate(-90deg)">6</div>
<div style="position:absolute;left:6px;top:318.8px;width:30px;height:13px;text-align:center;font-size:10.5px;line-height:13px;color:#000;letter-spacing:-0.4px;transform:rotate(-90deg)">7</div>
<div style="position:absolute;left:6px;top:337.7px;width:30px;height:13px;text-align:center;font-size:10.5px;line-height:13px;color:#000;letter-spacing:-0.4px;transform:rotate(-90deg)">8</div>
<div style="position:absolute;left:6px;top:356.6px;width:30px;height:13px;text-align:center;font-size:10.5px;line-height:13px;color:#000;letter-spacing:-0.4px;transform:rotate(-90deg)">9</div>
<div style="position:absolute;left:6px;top:375.5px;width:30px;height:13px;text-align:center;font-size:10.5px;line-height:13px;color:#000;letter-spacing:-0.4px;transform:rotate(-90deg)">10</div>
<div style="position:absolute;left:6px;top:394.4px;width:30px;height:13px;text-align:center;font-size:10.5px;line-height:13px;color:#000;letter-spacing:-0.4px;transform:rotate(-90deg)">11</div>
<div style="position:absolute;left:6px;top:413.3px;width:30px;height:13px;text-align:center;font-size:10.5px;line-height:13px;color:#000;letter-spacing:-0.4px;transform:rotate(-90deg)">12</div>
<div style="position:absolute;left:6px;top:432.2px;width:30px;height:13px;text-align:center;font-size:10.5px;line-height:13px;color:#000;letter-spacing:-0.4px;transform:rotate(-90deg)">13</div>
<div style="position:absolute;left:6px;top:451.1px;width:30px;height:13px;text-align:center;font-size:10.5px;line-height:13px;color:#000;letter-spacing:-0.4px;transform:rotate(-90deg)">14</div>
<div style="position:absolute;left:6px;top:470.0px;width:30px;height:13px;text-align:center;font-size:10.5px;line-height:13px;color:#000;letter-spacing:-0.4px;transform:rotate(-90deg)">15</div>
<div style="position:absolute;left:6px;top:488.9px;width:30px;height:13px;text-align:center;font-size:10.5px;line-height:13px;color:#000;letter-spacing:-0.4px;transform:rotate(-90deg)">16</div>
<div style="position:absolute;left:6px;top:507.8px;width:30px;height:13px;text-align:center;font-size:10.5px;line-height:13px;color:#000;letter-spacing:-0.4px;transform:rotate(-90deg)">17</div>
<div style="position:absolute;left:6px;top:526.7px;width:30px;height:13px;text-align:center;font-size:10.5px;line-height:13px;color:#000;letter-spacing:-0.4px;transform:rotate(-90deg)">18</div>
<div style="position:absolute;left:6px;top:545.6px;width:30px;height:13px;text-align:center;font-size:10.5px;line-height:13px;color:#000;letter-spacing:-0.4px;transform:rotate(-90deg)">19</div>
<div style="position:absolute;left:6px;top:564.5px;width:30px;height:13px;text-align:center;font-size:10.5px;line-height:13px;color:#000;letter-spacing:-0.4px;transform:rotate(-90deg)">20</div>
<div style="position:absolute;left:6px;top:583.4px;width:30px;height:13px;text-align:center;font-size:10.5px;line-height:13px;color:#000;letter-spacing:-0.4px;transform:rotate(-90deg)">21</div>
<div style="position:absolute;left:6px;top:602.3px;width:30px;height:13px;text-align:center;font-size:10.5px;line-height:13px;color:#000;letter-spacing:-0.4px;transform:rotate(-90deg)">22</div>
<div style="position:absolute;left:6px;top:621.2px;width:30px;height:13px;text-align:center;font-size:10.5px;line-height:13px;color:#000;letter-spacing:-0.4px;transform:rotate(-90deg)">23</div>
<div style="position:absolute;left:6px;top:640.1px;width:30px;height:13px;text-align:center;font-size:10.5px;line-height:13px;color:#000;letter-spacing:-0.4px;transform:rotate(-90deg)">24</div>
<div style="position:absolute;left:6px;top:659.0px;width:30px;height:13px;text-align:center;font-size:10.5px;line-height:13px;color:#000;letter-spacing:-0.4px;transform:rotate(-90deg)">25</div>
<div style="position:absolute;left:739px;top:125px;width:1px;height:601px;background:#8e8e8e"></div>
<div style="position:absolute;left:33px;top:725px;width:707px;height:1px;background:#8e8e8e"></div>
<div style="position:absolute;left:740px;top:4px;width:1px;height:723px;background:#e6e6e6"></div>
<div style="position:absolute;left:0px;top:726px;width:741px;height:1px;background:#e6e6e6"></div>
</body></html>
